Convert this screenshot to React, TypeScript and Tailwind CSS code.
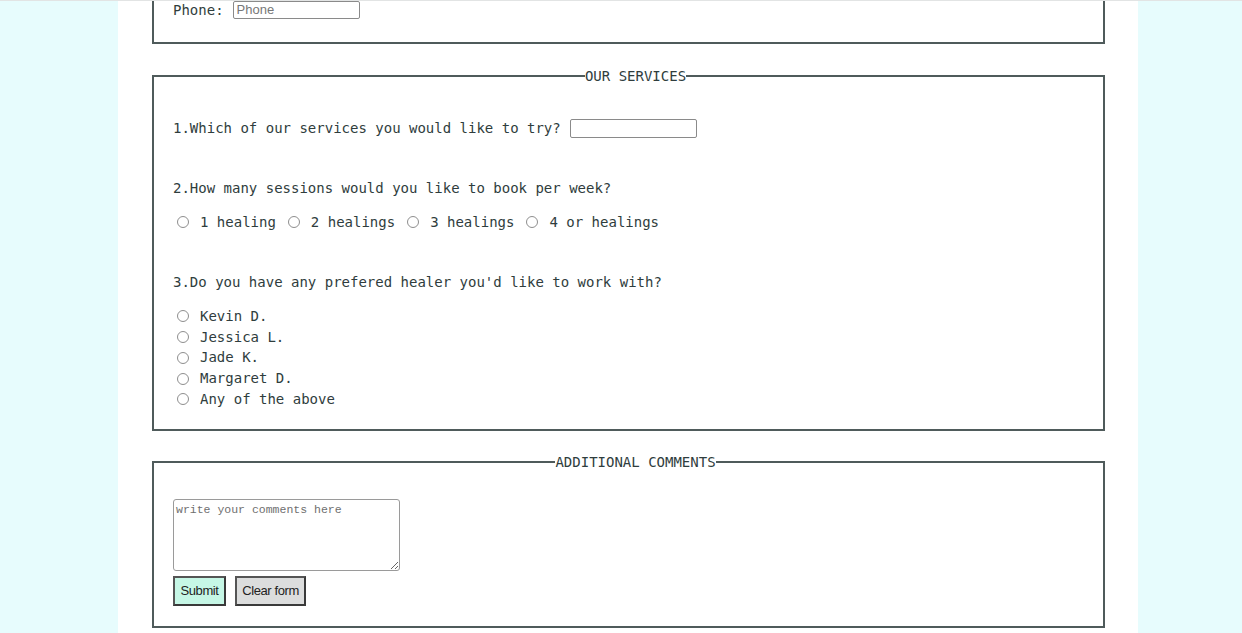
import React from "react";

const mono = "font-['DejaVu_Sans_Mono','Liberation_Mono',monospace]";

const Radio: React.FC<{ name: string; label: string; className?: string }> = ({ name, label, className }) => (
  <label className={`flex items-center ${className ?? ""}`}>
    <input
      type="radio"
      name={name}
      className="appearance-none ml-[4px] mr-[11px] w-[12px] h-[12px] rounded-full border border-[#8e8e8e] bg-white"
    />
    <span>{label}</span>
  </label>
);

const sessions = ["1 healing", "2 healings", "3 healings", "4 or healings"];
const healers = ["Kevin D.", "Jessica L.", "Jade K.", "Margaret D.", "Any of the above"];

export default function App() {
  return (
    <div className={`min-h-screen bg-[#e7fcfd] border-t border-[#e2e4e4] text-[#2f3d3d] text-[14px] ${mono}`}>
      <div className="ml-[118px] w-[1020px] min-h-[632px] bg-white pl-[34px] pr-[33px]">
        {/* tail of the contact fieldset */}
        <div className="border-2 border-t-0 border-[#4f5b5b] pl-[19px] h-[43px]">
          <div className="flex items-center h-[18px] leading-[18px]">
            <span className="mr-[9px] -mt-[1px]">Phone:</span>
            <input
              placeholder="Phone"
              className="w-[127px] h-[18px] border border-[#8a8a8a] rounded-[2px] px-[3px] text-[13px] font-['Liberation_Sans',Arial,sans-serif] placeholder:text-[#777]"
            />
          </div>
        </div>

        <fieldset className="mt-[22px] border-2 border-[#4f5b5b] pl-[19px] pr-[5px] pb-[19px]">
          <legend className="mx-auto leading-[20px]">OUR SERVICES</legend>

          <div className="mt-[32px] flex items-center h-[20px]">
            <span>1.Which of our services you would like to try?</span>
            <input className="ml-[9px] w-[127px] h-[19px] border border-[#8a8a8a] rounded-[2px]" />
          </div>

          <p className="mt-[40px] leading-[20px]">2.How many sessions would you like to book per week?</p>
          <div className="mt-[14px] flex items-center h-[20px] gap-[8px]">
            {sessions.map((s) => (
              <Radio key={s} name="sessions" label={s} />
            ))}
          </div>

          <p className="mt-[40px] leading-[20px]">3.Do you have any prefered healer you'd like to work with?</p>
          <div className="mt-[14px] flex flex-col">
            {healers.map((h) => (
              <Radio key={h} name="healer" label={h} className="h-[20.75px]" />
            ))}
          </div>
        </fieldset>

        <fieldset className="mt-[21px] border-2 border-[#4f5b5b] pl-[19px] pr-[5px] pb-[20px]">
          <legend className="mx-auto leading-[20px]">ADDITIONAL COMMENTS</legend>

          <textarea
            placeholder="write your comments here"
            className="block mt-[27px] w-[227px] h-[72px] border border-[#9a9a9a] rounded-[3px] px-[2px] py-[1px] text-[11.5px] font-['Liberation_Mono','Courier_New',monospace] placeholder:text-[#6f6f6f]"
          />
          <div className="mt-[5px] flex gap-[9px] font-['Liberation_Sans',Arial,sans-serif] text-[13px] tracking-[-0.4px] text-[#222]">
            <button className="w-[53px] h-[30px] shrink-0 bg-[#c6f7e6] border-2 border-[#3a3a3a] border-t-[#555] border-l-[#555]">Submit</button>
            <button className="w-[71px] h-[30px] shrink-0 bg-[#dcdddd] border-2 border-[#3a3a3a] border-t-[#555] border-l-[#555]">Clear form</button>
          </div>
        </fieldset>
      </div>
    </div>
  );
}
